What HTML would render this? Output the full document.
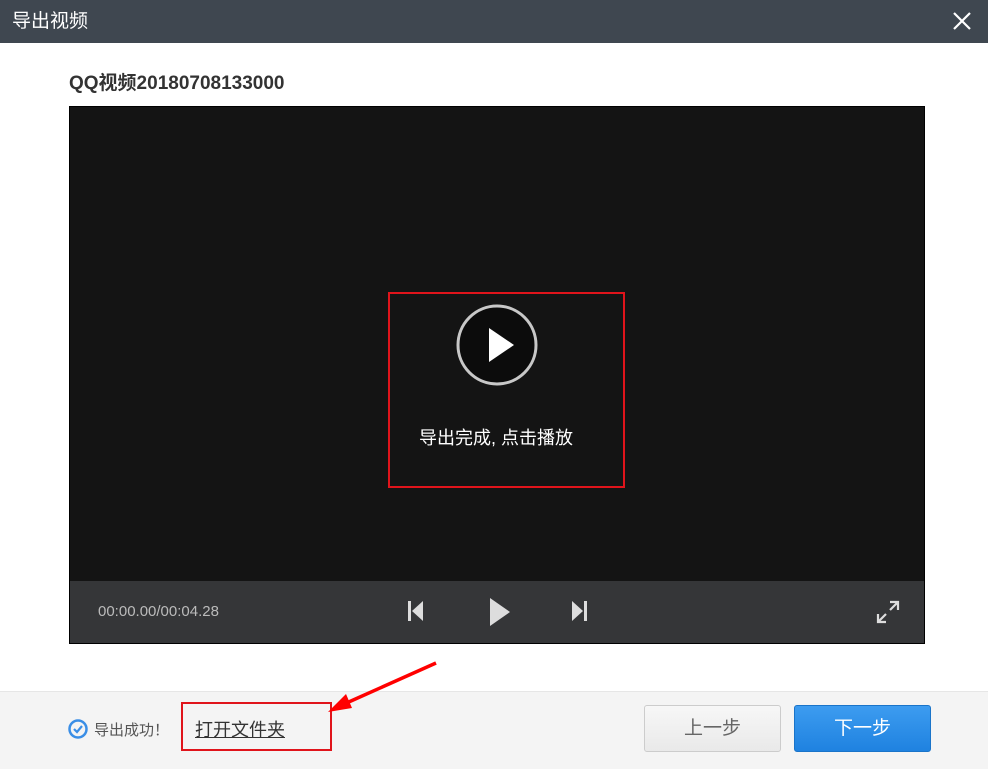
<!DOCTYPE html>
<html><head><meta charset="utf-8"><style>
*{margin:0;padding:0;box-sizing:border-box}
body{width:988px;height:769px;position:relative;background:#fff;font-family:"Liberation Sans","Noto Sans CJK SC",sans-serif;overflow:hidden}
.tb{position:absolute;left:0;top:0;width:988px;height:43px;background:#3f4750;color:#fff;font-size:19px;line-height:43px;padding-left:12px}
.x{position:absolute;right:16px;top:11px}
.name{position:absolute;left:69px;top:68px;font-size:19px;font-weight:bold;color:#333}
.vid{position:absolute;left:69px;top:106px;width:856px;height:538px;background:#141414;border:1px solid #000}
.ctl{position:absolute;left:0;bottom:0;width:100%;height:62px;background:#353638}
.red{position:absolute;border:2px solid #e0141b}
.foot{position:absolute;left:0;top:691px;width:988px;height:78px;background:#f4f4f4;border-top:1px solid #e6e6e6}
.btn{position:absolute;top:13px;width:137px;height:47px;border-radius:3px;font-size:19px;text-align:center;line-height:45px}
</style></head><body>
<div class="tb">导出视频
<svg class="x" width="20" height="20" viewBox="0 0 20 20"><path d="M2 2L18 18M18 2L2 18" stroke="#fff" stroke-width="2.2"/></svg></div>
<div class="name">QQ视频20180708133000</div>
<div class="vid">
 <svg style="position:absolute;left:386px;top:197px" width="82" height="82" viewBox="0 0 82 82"><circle cx="41" cy="41" r="39" fill="#0c0c0c" stroke="#c8c8c8" stroke-width="3"/><path d="M33 24L58 41L33 58Z" fill="#fff"/></svg>
 <div style="position:absolute;left:349px;top:317px;color:#fff;font-size:18px">导出完成, 点击播放</div>
 <div class="ctl">
  <div style="position:absolute;left:28px;top:22px;color:#bbb;font-size:15px">00:00.00/00:04.28</div>
  <svg style="position:absolute;left:337px;top:19px" width="18" height="22" viewBox="0 0 18 22"><rect x="1" y="1" width="3" height="20" fill="#ddd"/><path d="M16 1L5 11L16 21Z" fill="#ddd"/></svg>
  <svg style="position:absolute;left:418px;top:16px" width="24" height="30" viewBox="0 0 24 30"><path d="M2 1L22 15L2 29Z" fill="#ddd"/></svg>
  <svg style="position:absolute;left:500px;top:19px" width="18" height="22" viewBox="0 0 18 22"><path d="M2 1L13 11L2 21Z" fill="#ddd"/><rect x="14" y="1" width="3" height="20" fill="#ddd"/></svg>
  <svg style="position:absolute;left:806px;top:19px" width="24" height="24" viewBox="0 0 24 24"><path d="M14 2H22V10M22 2L14 10M10 22H2V14M2 22L10 14" stroke="#ddd" stroke-width="2.2" fill="none"/></svg>
 </div>
</div>
<div class="red" style="left:388px;top:292px;width:237px;height:196px"></div>
<div class="foot">
 <svg style="position:absolute;left:68px;top:27px" width="20" height="20" viewBox="0 0 20 20"><circle cx="10" cy="10" r="8.5" fill="none" stroke="#3a8ee6" stroke-width="2.5"/><path d="M6 10L9 13L14 7" stroke="#3a8ee6" stroke-width="2.2" fill="none"/></svg>
 <div style="position:absolute;left:94px;top:27px;font-size:15px;color:#555">导出成功！</div>
 <div style="position:absolute;left:195px;top:24px;font-size:18px;color:#333;text-decoration:underline">打开文件夹</div>
 <div class="btn" style="left:644px;background:linear-gradient(#f7f7f7,#e9e9e9);border:1px solid #ccc;color:#666">上一步</div>
 <div class="btn" style="left:794px;background:linear-gradient(#3d9cf0,#1f82e0);border:1px solid #1a74c9;color:#fff">下一步</div>
</div>
<div class="red" style="left:181px;top:702px;width:151px;height:49px"></div>
<svg style="position:absolute;left:320px;top:660px" width="120" height="60" viewBox="0 0 120 60"><path d="M116 3L22 45" stroke="#f00" stroke-width="3.5"/><path d="M8 52L26 34L32 48Z" fill="#f00"/></svg>
</body></html>
